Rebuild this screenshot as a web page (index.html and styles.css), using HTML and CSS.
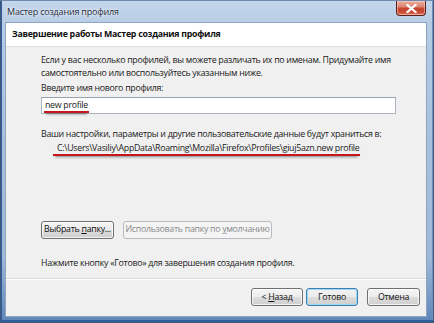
FILE: index.html
```html
<!DOCTYPE html>
<html lang="ru">
<head>
<meta charset="utf-8">
<link rel="stylesheet" href="styles.css">
</head>
<body>
<div class="window">
  <div class="titlebar">
    <span class="title">Мастер создания профиля</span>
    <span class="close"><svg width="11" height="9" viewBox="0 0 11 9"><path d="M1.5 1 L9.5 8 M9.5 1 L1.5 8" stroke="#fff" stroke-width="2.2" stroke-linecap="square"/></svg></span>
  </div>
  <div class="client">
    <div class="header">Завершение работы Мастер создания профиля</div>
    <div class="content">
      <p class="intro">Если у вас несколько профилей, вы можете различать их по именам. Придумайте имя самостоятельно или воспользуйтесь указанным ниже.</p>
      <p class="label">Введите имя нового профиля:</p>
      <div class="input"><span class="mark mark-name">new profile</span></div>
      <p class="label label-path">Ваши настройки, параметры и другие пользовательские данные будут храниться в:</p>
      <p class="path"><span class="mark mark-path">C:\Users\Vasiliy\AppData\Roaming\Mozilla\Firefox\Profiles\giuj5azn.new profile</span></p>
      <div class="folder-row">
        <span class="btn btn-folder"><span>Выбрать <u>п</u>апку...</span></span>
        <span class="btn btn-disabled"><span>Использовать папку по <u>у</u>молчанию</span></span>
      </div>
      <p class="finish">Нажмите кнопку «Готово» для завершения создания профиля.</p>
    </div>
    <div class="footer">
      <span class="btn btn-nav"><span>&lt; <u>Н</u>азад</span></span>
      <span class="btn btn-nav btn-default"><span>Готово</span></span>
      <span class="btn btn-nav btn-cancel"><span>Отмена</span></span>
    </div>
  </div>
</div>
</body>
</html>
```

FILE: styles.css
```css
* { box-sizing: border-box; }
html, body { margin: 0; padding: 0; }
body {
  width: 434px;
  height: 323px;
  overflow: hidden;
  font-family: "Open Sans", "Noto Sans", sans-serif;
  font-size: 8.8px;
  letter-spacing: -0.28px;
  color: #1a1a1a;
}
p { margin: 0; }
.window {
  width: 434px;
  height: 323px;
  display: flex;
  flex-direction: column;
  background: linear-gradient(180deg, #c4d6ec 0%, #b6cbe4 8%, #aac1dd 40%, #9fb8d8 80%, #5f86b8 100%);
  border: 1px solid #40597a;
  border-top-color: #6f8aae;
  box-shadow: inset 1px 0 0 #2f5e9c, inset 0 -2px 0 #2f5e9c, inset -1px 0 0 #6d90bd;
}
.titlebar {
  height: 21px;
  display: flex;
  align-items: flex-start;
  padding-left: 6px;
  flex: none;
}
.title {
  font-size: 9px;
  letter-spacing: -0.2px;
  color: #1c2a3c;
  line-height: 21px;
  text-shadow: 0 0 4px rgba(255,255,255,0.9), 0 0 2px rgba(255,255,255,0.9);
}
.close {
  margin-left: auto;
  margin-right: 7px;
  width: 30px;
  height: 15px;
  display: flex;
  align-items: center;
  justify-content: center;
  border: 1px solid #5b2219;
  border-top: none;
  border-radius: 0 0 4px 4px;
  background: linear-gradient(180deg, #eab0a2 0%, #dc8571 40%, #c4422b 55%, #c94a33 80%, #e0806a 100%);
  box-shadow: inset 0 0 0 1px rgba(255,210,200,0.55);
}
.client {
  flex: 1;
  margin: 0 6px 5px 4px;
  border: 1px solid #8ea5c2;
  display: flex;
  flex-direction: column;
  background: #f0f0f0;
}
.header {
  height: 24px;
  background: #fff;
  border-bottom: 1px solid #dedede;
  padding-left: 6px;
  font-weight: 700;
  line-height: 22px;
  color: #101010;
  flex: none;
}
.content {
  flex: 1;
  padding: 7px 0 0 35px;
  display: flex;
  flex-direction: column;
  align-items: flex-start;
  line-height: 12.5px;
}
.intro { width: 368px; }
.label { margin-top: 3px; }
.input {
  margin-top: 2px;
  width: 355px;
  height: 17px;
  background: #fff;
  border: 1px solid #abb3bd;
  border-top-color: #99a3ae;
  padding-left: 2px;
  line-height: 14px;
}
.mark {
  border-bottom: 2px solid #c4161c;
  box-shadow: 0 3px 3px -2px rgba(0,0,0,0.45);
}
.mark-name { padding: 0 1px 0 1px; }
.label-path { margin-top: 14px; }
.path { margin-top: 2px; margin-left: 12px; }
.mark-path { padding: 0 1px 0 4px; }
.folder-row {
  margin-top: 66px;
  display: flex;
  gap: 9px;
}
.btn {
  height: 18px;
  display: inline-flex;
  align-items: center;
  justify-content: center;
  padding: 0 5px;
  border: 1px solid #707070;
  border-radius: 3px;
  background: linear-gradient(180deg, #f6f6f6 0%, #ebebeb 48%, #dcdcdc 52%, #cfcfcf 100%);
  box-shadow: inset 0 0 0 1px rgba(255,255,255,0.75);
  color: #111;
  white-space: nowrap;
}
.btn u { text-underline-offset: 1px; }
.btn-folder { width: 73px; }
.btn-disabled {
  width: 149px;
  border-color: #b8bcc0;
  background: #f4f4f4;
  color: #8a8a8a;
  box-shadow: none;
}
.finish { margin-top: 18px; }
.footer {
  flex: none;
  height: 38px;
  border-top: 1px solid #dadada;
  box-shadow: inset 0 1px 0 #fff;
  display: flex;
  align-items: center;
  justify-content: flex-end;
  gap: 3px;
  padding: 0 6px 1px 0;
}
.btn-nav { width: 52px; }
.btn-default {
  border-color: #3c7fb1;
  box-shadow: inset 0 0 0 1px #9fd5f5;
  background: linear-gradient(180deg, #f3f3f3 0%, #ebebeb 48%, #dddddd 52%, #cfcfcf 100%);
}
.btn-cancel { margin-left: 6px; width: 53px; }
```
